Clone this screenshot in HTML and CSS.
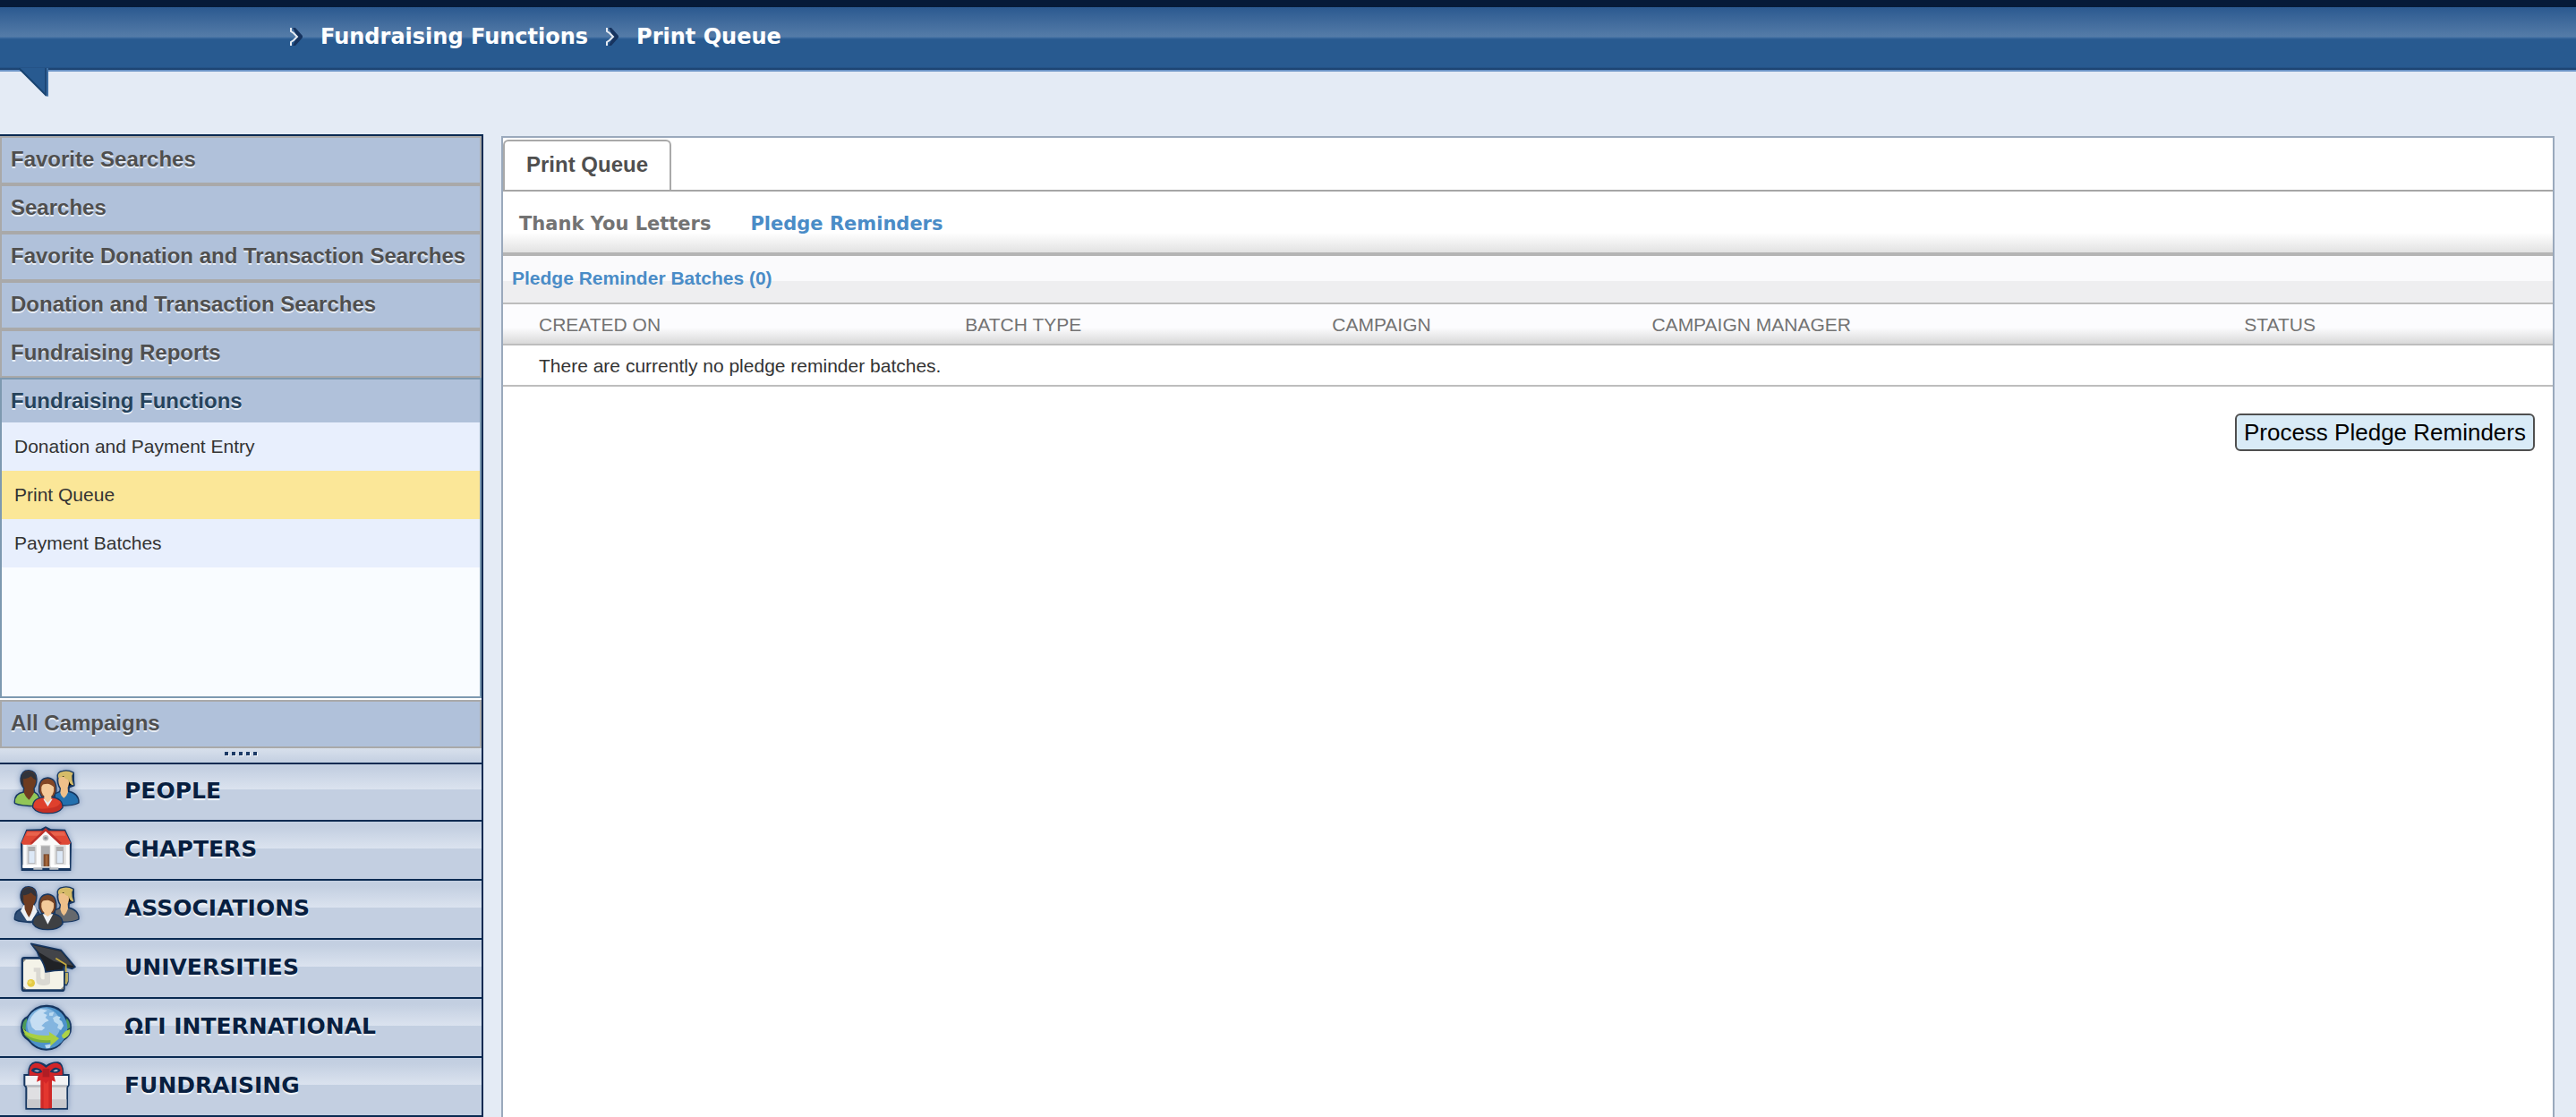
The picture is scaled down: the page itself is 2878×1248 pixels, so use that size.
FILE: index.html
```
<!DOCTYPE html>
<html lang="en">
<head>
    <meta charset="UTF-8">
    <meta name="viewport" content="width=device-width, initial-scale=1.0">
    <title>Print Queue</title>
    <link rel="stylesheet" href="styles.css">
</head>

<body>
<header class="topbar">
    <nav class="breadcrumb" aria-label="Breadcrumb">
        <svg class="chevron" viewBox="0 0 14 20"><path d="M3 0 H6 L14 9 V11 L6 20 H3 L8 10 Z" fill="#17345f"/><path d="M1 0 V4 L4 6 L8 10 L4 14 L1 16 V20" fill="none" stroke="#e6ebf2" stroke-width="2"/></svg>
        <a href="#">Fundraising Functions</a>
        <svg class="chevron" viewBox="0 0 14 20"><path d="M3 0 H6 L14 9 V11 L6 20 H3 L8 10 Z" fill="#17345f"/><path d="M1 0 V4 L4 6 L8 10 L4 14 L1 16 V20" fill="none" stroke="#e6ebf2" stroke-width="2"/></svg>
        <a href="#">Print Queue</a>
    </nav>
    <svg class="pointer" viewBox="0 0 36 34"><path d="M0 0 L34 0 L34 32 Z" fill="#285a90"/><path d="M1 0 L32 31" stroke="#17426f" stroke-width="2"/><path d="M31 0 V29" stroke="#1d4777" stroke-width="2"/><path d="M33 0 V32" stroke="#5180b4" stroke-width="1"/></svg>
</header>

<div class="page">
    <aside class="sidebar">
        <div class="accordion">
            <a class="section" href="#">Favorite Searches</a>
            <a class="section" href="#">Searches</a>
            <a class="section" href="#">Favorite Donation and Transaction Searches</a>
            <a class="section" href="#">Donation and Transaction Searches</a>
            <a class="section" href="#">Fundraising Reports</a>
            <div class="open-section">
                <a class="section-title" href="#">Fundraising Functions</a>
                <ul class="functions">
                    <li><a href="#">Donation and Payment Entry</a></li>
                    <li><a class="selected" href="#">Print Queue</a></li>
                    <li><a href="#">Payment Batches</a></li>
                </ul>
            </div>
            <a class="section" href="#">All Campaigns</a>
        </div>

        <div class="splitter"><i></i><i></i><i></i><i></i><i></i></div>

        <nav class="modules" aria-label="Modules">
            <a href="#">
                <svg class="icon" viewBox="36 39 240 192">
                    <!-- left -->
                    <g stroke="#173761" stroke-width="8" stroke-linejoin="round">
                        <path d="M51 171 Q49 141 80 137 L115 137 Q134 145 134 180 Q72 181 51 171 Z"/>
                        <path d="M71 90 Q74 63 97 64 Q120 66 121 91 Q121 112 112 122 L114 137 Q104 154 97 161 Q86 152 80 137 L82 121 Q70 108 71 90 Z"/>
                    </g>
                    <path d="M51 171 Q49 141 80 137 L115 137 Q134 145 134 180 Q72 181 51 171 Z" fill="#92c657"/>
                    <path d="M71 90 Q74 63 97 64 Q120 66 121 91 Q121 112 112 122 L114 137 Q104 154 97 161 Q86 152 80 137 L82 121 Q70 108 71 90 Z" fill="#6f3c20"/>
                    <path d="M71 92 Q72 65 98 65 Q120 68 121 95 Q112 92 104 82 Q90 93 78 90 L79 118 Q69 110 71 92 Z" fill="#31333b"/>
                    <!-- right -->
                    <g stroke="#173761" stroke-width="8" stroke-linejoin="round">
                        <path d="M186 178 V142 L203 134 H228 Q263 142 262 170 Q242 181 186 178 Z"/>
                        <path d="M195 86 Q192 68 211 66 Q228 62 245 71 Q244 92 247 112 L230 118 L228 136 L214 155 L202 137 L204 122 Q192 106 195 86 Z"/>
                    </g>
                    <path d="M186 178 V142 L203 134 H228 Q263 142 262 170 Q242 181 186 178 Z" fill="#2470ae"/>
                    <path d="M197 84 H229 Q234 106 227 120 L228 136 Q224 148 214 155 Q204 148 202 137 L204 122 Q193 106 197 84 Z" fill="#eec08a"/>
                    <path d="M195 86 Q192 68 211 66 Q228 62 245 71 L241 80 Q240 96 247 112 Q233 112 230 94 Q218 92 213 81 Q206 88 195 86 Z" fill="#d5bb68"/>
                    <!-- front -->
                    <g stroke="#173761" stroke-width="8" stroke-linejoin="round">
                        <path d="M112 186 Q110 158 147 154 H173 Q208 158 208 186 Q196 204 160 204 Q124 204 112 186 Z"/>
                        <path d="M133 134 Q129 91 160 89 Q190 92 186 134 L179 149 H141 Z"/>
                    </g>
                    <path d="M112 186 Q110 158 147 154 H173 Q208 158 208 186 Q196 204 160 204 Q124 204 112 186 Z" fill="#df402d"/>
                    <path d="M113 187 Q138 196 182 186 Q198 181 204 169 Q209 176 208 186 Q196 204 160 204 Q124 204 113 187 Z" fill="#b62720" opacity=".6"/>
                    <path d="M145 158 L160 184 L176 158 Z" fill="#e7eaf0"/>
                    <path d="M133 134 Q129 91 160 89 Q190 92 186 134 L179 149 H141 Z" fill="#834625"/>
                    <path d="M139 118 Q142 107 153 108 Q166 104 180 118 Q182 139 172 148 V158 L160 170 L148 158 V148 Q137 139 139 118 Z" fill="#f4ca9a"/>
                </svg>
                <span>PEOPLE</span>
            </a>
            <a href="#">
                <svg class="icon" viewBox="36 234 240 192">
                    <path d="M69 307 L88 260 L136 259 L153 250 L171 259 L219 260 L240 306 L238 399 H71 Z" fill="#173761"/>
                    <path d="M76 306 H234 V389 H76 Z" fill="#dedede"/>
                    <path d="M90 265 H217 L237 306 L229 311 H78 L71 306 Z" fill="#df4936"/>
                    <path d="M92 269 H215 L220 281 H87 Z" fill="#f07861" opacity=".55"/>
                    <path d="M153 255 L207 306 L195 310 H111 L101 306 Z" fill="#bd2f2a"/>
                    <path d="M153 266 L202 312 H105 Z" fill="#fafafa"/>
                    <circle cx="153" cy="289" r="10" fill="#bfbfc1"/><circle cx="153" cy="289" r="5" fill="#8c9098"/>
                    <path d="M94 318 H118 V375 H94 Z M188 318 H213 V375 H188 Z M138 316 H167 V384 H138 Z" fill="#adadaf"/>
                    <path d="M97 333 H116 V373 H97 Z M191 333 H210 V373 H191 Z" fill="#dce8f6"/>
                    <path d="M123 312 H136 V384 H123 Z M169 312 H182 V384 H169 Z M79 312 H89 V382 H79 Z M221 312 H231 V382 H221 Z" fill="#fafafa"/>
                    <path d="M146 343 H165 V384 H146 Z" fill="#7d4b2c"/><path d="M152 346 H160 V384 H152 Z" fill="#a6683c"/>
                    <path d="M76 379 H137 V389 H76 Z M171 379 H234 V389 H171 Z" fill="#fff"/>
                    <path d="M112 388 H142 V395 H112 Z M166 388 H196 V395 H166 Z" fill="#b9bdc2"/>
                </svg>
                <span>CHAPTERS</span>
            </a>
            <a href="#">
                <svg class="icon" viewBox="36 42 240 192">
                    <!-- left -->
                    <g stroke="#173761" stroke-width="8" stroke-linejoin="round">
                        <path d="M51 171 Q49 141 80 137 L115 137 Q134 145 134 180 Q72 181 51 171 Z"/>
                        <path d="M71 90 Q74 63 97 64 Q120 66 121 91 Q121 112 112 122 L114 137 Q104 154 97 161 Q86 152 80 137 L82 121 Q70 108 71 90 Z"/>
                    </g>
                    <path d="M51 171 Q49 141 80 137 L115 137 Q134 145 134 180 Q72 181 51 171 Z" fill="#304e75"/>
                    <path d="M79 124 L69 143 L90 176 H106 L125 145 L115 124 Z" fill="#eef1f5"/>
                    <path d="M71 90 Q74 63 97 64 Q120 66 121 91 Q121 112 112 122 L109 137 Q104 154 97 165 Q89 152 83 137 L82 121 Q70 108 71 90 Z" fill="#6f3c20"/>
                    <path d="M71 92 Q72 65 98 65 Q120 68 121 95 Q112 92 104 82 Q90 93 78 90 L79 118 Q69 110 71 92 Z" fill="#31333b"/>
                    <!-- right -->
                    <g stroke="#173761" stroke-width="8" stroke-linejoin="round">
                        <path d="M186 178 V142 L203 134 H228 Q263 142 262 170 Q242 181 186 178 Z"/>
                        <path d="M195 86 Q192 68 211 66 Q228 62 245 71 Q244 92 247 112 L230 118 L228 136 L214 155 L202 137 L204 122 Q192 106 195 86 Z"/>
                    </g>
                    <path d="M186 178 V142 L203 134 H228 Q263 142 262 170 Q242 181 186 178 Z" fill="#66696d"/>
                    <path d="M197 84 H229 Q234 106 227 120 L228 136 Q224 150 214 160 Q204 150 202 137 L204 122 Q193 106 197 84 Z" fill="#eec08a"/>
                    <path d="M195 86 Q192 68 211 66 Q228 62 245 71 L241 80 Q240 96 247 112 Q233 112 230 94 Q218 92 213 81 Q206 88 195 86 Z" fill="#d5bb68"/>
                    <!-- front -->
                    <g stroke="#173761" stroke-width="8" stroke-linejoin="round">
                        <path d="M112 186 Q110 158 147 154 H173 Q208 158 208 186 Q196 204 160 204 Q124 204 112 186 Z"/>
                        <path d="M133 134 Q129 91 160 89 Q190 92 186 134 L179 149 H141 Z"/>
                    </g>
                    <path d="M112 186 Q110 158 147 154 H173 Q208 158 208 186 Q196 204 160 204 Q124 204 112 186 Z" fill="#3e4043"/>
                    <path d="M143 154 L160 188 L178 154 Z" fill="#eef1f5"/>
                    <path d="M133 134 Q129 91 160 89 Q190 92 186 134 L179 149 H141 Z" fill="#754224"/>
                    <path d="M139 118 Q142 107 153 108 Q166 104 180 118 Q182 139 172 148 V153 L160 162 L148 153 V148 Q137 139 139 118 Z" fill="#f4ca9a"/>
                </svg>
                <span>ASSOCIATIONS</span>
            </a>
            <a href="#">
                <svg class="icon" viewBox="36 30 240 192">
                    <rect x="71" y="87" width="147" height="117" rx="10" fill="#173761"/>
                    <path d="M85 95 H206 L213 102 V188 L206 196 H86 L78 188 V104 Z" fill="#f4f3e8"/>
                    <path d="M78 105 L88 95 H78 Z M78 186 L88 196 H78 Z M213 186 L203 196 H213 Z" fill="#8d8c83"/>
                    <path d="M113 124 H136 V155 Q139 166 149 162 V134 H168 V175 Q165 183 147 183 Q121 184 121 166 V137 H113 Z" fill="#dad9d2"/>
                    <circle cx="104" cy="175" r="13" fill="#e4cb45"/><circle cx="101" cy="172" r="6" fill="#efdc68"/>
                    <path d="M104 43 L205 65 L252 121 L242 127 L214 120 L211 132 Q184 132 153 138 Q150 112 132 88 L124 69 Z" fill="#202226" stroke="#173761" stroke-width="5" stroke-linejoin="round"/>
                    <path d="M109 48 L204 69 L244 117 L181 102 L132 73 Z" fill="#424449"/>
                    <path d="M187 92 L221 113 V139" fill="none" stroke="#c6aa3c" stroke-width="5"/>
                    <path d="M215 139 H230 V171 L225 184 H215 Z" fill="#173761"/>
                    <path d="M219 141 H228 V168 L223 180 L218 178 Z" fill="#b9ad62"/>
                </svg>
                <span>UNIVERSITIES</span>
            </a>
            <a href="#">
                <svg class="icon" viewBox="36 228 240 192">
                    <path d="M69 324 Q71 293 91 286 Q116 247 156 248 Q198 247 221 284 Q241 297 240 325 Q241 353 213 369 Q194 401 155 401 Q119 401 94 369 Q68 353 69 324 Z" fill="#173761"/>
                    <path d="M75 326 Q75 301 90 293 V335 Z M235 325 Q235 303 223 293 L219 334 Z" fill="#4d9b57"/>
                    <circle cx="156" cy="325" r="70" fill="#4d92c9"/>
                    <circle cx="147" cy="315" r="56" fill="#83b5df"/>
                    <path d="M100 300 Q111 273 137 262 L159 267 L145 276 L158 282 L152 291 L164 301 L151 307 L139 318 L151 325 L141 334 L119 334 L107 323 Z" fill="#c6def3"/>
                    <path d="M165 275 L181 272 L176 285 L165 284 Z M177 292 L189 285 L203 289 L198 297 L207 303 L213 318 L204 333 L192 325 L196 314 L182 305 Z M150 383 L174 379 L166 393 L155 394 Z" fill="#badaf0"/>
                    <path d="M76 322 Q82 340 107 345 Q137 354 166 350 L164 338 L198 361 L169 386 V371 Q135 377 110 366 Q78 356 76 322 Z" fill="#a9cf42"/>
                    <path d="M78 343 Q116 371 169 366 V374 Q101 381 78 343 Z" fill="#79b13d"/>
                    <path d="M234 330 Q238 349 217 361 Q206 361 208 349 L220 336 Z" fill="#add348"/>
                </svg>
                <span>ΩΓΙ INTERNATIONAL</span>
            </a>
            <a href="#">
                <svg class="icon" viewBox="36 426 240 192">
                    <path d="M79 480 H94 Q92 443 119 438 Q140 438 155 450 Q175 437 195 439 Q214 443 214 480 H233 V518 L228 526 V599 H85 V526 L79 518 Z" fill="#173761"/>
                    <path d="M91 520 H223 V593 H91 Z" fill="#dfdfe2"/><path d="M91 565 H223 V593 H91 Z" fill="#c8c8cc"/>
                    <path d="M85 486 H228 V518 H85 Z" fill="#f3f3f5"/>
                    <path d="M89 518 H224 V524 H89 Z" fill="#b8b8bd"/>
                    <path d="M136 485 H174 V595 H136 Z" fill="#cf2927"/><path d="M146 485 H163 V595 H146 Z" fill="#e3362f"/>
                    <path d="M98 485 Q94 449 118 443 Q137 442 154 459 Q175 441 193 444 Q213 450 209 484 L181 485 L186 506 L166 499 L154 512 L141 499 L123 506 L128 485 Z" fill="#d32528"/>
                    <path d="M104 469 Q113 451 137 465 L142 473 Q119 484 104 469 Z M167 473 Q184 448 203 466 Q199 482 167 473 Z" fill="#173761"/>
                    <path d="M114 469 Q123 463 133 470 Q123 475 114 469 Z M178 470 Q188 461 195 468 Q188 474 178 470 Z" fill="#b3bfd1"/>
                    <path d="M143 462 H166 V490 H143 Z" fill="#b01d24"/>
                </svg>
                <span>FUNDRAISING</span>
            </a>
        </nav>
    </aside>

    <main class="content">
        <div class="tabs">
            <a class="tab" href="#">Print Queue</a>
        </div>
        <div class="subtabs">
            <a href="#">Thank You Letters</a>
            <a class="current" href="#">Pledge Reminders</a>
        </div>
        <h2 class="batch-title">Pledge Reminder Batches (0)</h2>
        <table class="batches">
            <thead>
                <tr>
                    <th class="created">CREATED ON</th>
                    <th class="type">BATCH TYPE</th>
                    <th class="campaign">CAMPAIGN</th>
                    <th class="manager">CAMPAIGN MANAGER</th>
                    <th class="status">STATUS</th>
                </tr>
            </thead>
            <tbody>
                <tr>
                    <td colspan="5">There are currently no pledge reminder batches.</td>
                </tr>
            </tbody>
        </table>
        <div class="actions">
            <button type="button">Process Pledge Reminders</button>
        </div>
    </main>
</div>
</body>
</html>
```
FILE: styles.css
```
* {
    box-sizing: border-box;
}

body {
    margin: 0;
    height: 100vh;
    display: flex;
    flex-direction: column;
    overflow: hidden;
    background-color: #e4ebf5;
    color: #333;
    font-family: "Liberation Sans", Arial, sans-serif;
    font-size: 21px;
}

a {
    color: inherit;
    text-decoration: none;
}

/* Top bar */
.topbar {
    position: relative;
    height: 80px;
    flex: none;
    border-top: 8px solid #061a38;
    border-bottom: 2px solid #6b93c6;
    background: linear-gradient(#2b5990 0, #557ca8 33px, #3f6da1 34px, #285a90 36px, #285a90 67px, #1a3f6c 69px);
}

.breadcrumb {
    display: flex;
    align-items: center;
    gap: 20px;
    height: 66px;
    padding-left: 324px;
    color: #fff;
    font-family: "DejaVu Sans", Verdana, sans-serif;
    font-size: 24px;
    font-weight: bold;
}

.chevron {
    width: 14px;
    height: 20px;
}

.pointer {
    position: absolute;
    top: 68px;
    left: 20px;
    width: 36px;
    height: 34px;
}

.page {
    flex: 1;
    display: flex;
    gap: 20px;
    min-height: 0;
    padding-right: 24px;
}

/* Sidebar */
.sidebar {
    width: 540px;
    flex: none;
    margin-top: 70px;
    border-top: 2px solid #0a2a52;
    border-right: 2px solid #0a2a52;
    background-color: #fff;
}

.section {
    display: block;
    height: 54px;
    padding-left: 10px;
    border: 2px solid #a9a9a9;
}

.section,
.section-title {
    background-color: #b0c1da;
    color: #4f4f4f;
    font-size: 24px;
    font-weight: bold;
    line-height: 48px;
    text-shadow: 0 2px 0 #e8eef6;
}

.open-section {
    height: 358px;
    margin-bottom: 2px;
    border: 2px solid #7d99b0;
    background-color: #f9fcff;
}

.section-title {
    display: block;
    height: 48px;
    padding-left: 10px;
    color: #26435c;
}

.functions {
    margin: 0;
    padding: 0;
    list-style: none;
}

.functions a {
    display: block;
    padding-left: 14px;
    background-color: #e8effd;
    line-height: 54px;
}

.functions .selected {
    background-color: #fbe798;
}

.splitter {
    display: flex;
    justify-content: center;
    gap: 4px;
    height: 16px;
    padding-top: 4px;
    background: linear-gradient(#d8e0ec, #c3cfe1);
}

.splitter i {
    width: 4px;
    height: 4px;
    background-color: #1c3a66;
    box-shadow: 1px 1px 0 #f4f7fa;
}

.modules a {
    display: flex;
    align-items: center;
    height: 66px;
    padding-left: 12px;
    border-top: 2px solid #0a2a52;
    background: linear-gradient(#c3cfe1 0, #c3cfe1 6px, #dbe3ef 30px, #c3cfe1 30px);
    color: #081f40;
    font-family: "DejaVu Sans", Verdana, sans-serif;
    font-size: 25px;
    font-weight: bold;
    text-shadow: 0 2px 1px #f4f7fb;
}

.modules a:first-child {
    height: 64px;
    background-position: 0 -2px;
}

.modules a:last-child {
    height: 68px;
    border-bottom: 2px solid #0a2a52;
}

.modules span {
    padding-bottom: 4px;
}

.icon {
    width: 80px;
    height: 64px;
    margin-right: 47px;
    filter: drop-shadow(0 0 3px #7a93b8);
}

/* Main panel */
.content {
    flex: 1;
    margin-top: 72px;
    border: 2px solid #9aa9bc;
    border-bottom: 0;
    background-color: #fff;
}

.tabs {
    display: flex;
    height: 60px;
    padding-top: 2px;
    border-bottom: 2px solid #a6a6a6;
}

.tab {
    padding: 0 24px;
    border: 2px solid #a9a9a9;
    border-bottom: 0;
    border-radius: 6px 6px 0 0;
    color: #4f4f4f;
    font-size: 24px;
    font-weight: bold;
    line-height: 52px;
}

.subtabs {
    display: flex;
    gap: 44px;
    height: 72px;
    padding-left: 18px;
    border-bottom: 4px solid #b4b4b4;
    background: linear-gradient(#fff 0, #fff 46px, #e2e2e2 68px);
    color: #737373;
    font-family: "DejaVu Sans", Verdana, sans-serif;
    font-weight: bold;
    line-height: 72px;
}

.subtabs .current,
.batch-title {
    color: #4a8cc7;
}

.batch-title {
    height: 54px;
    margin: 0;
    padding-left: 10px;
    border-bottom: 2px solid #bdbdbd;
    background: linear-gradient(#fafafc 0, #fafafc 28px, #eeeef0 28px);
    font-size: 21px;
    line-height: 50px;
}

.batches {
    width: 100%;
    border-collapse: separate;
    border-spacing: 0;
    table-layout: fixed;
}

.batches th,
.batches td {
    height: 46px;
    padding: 2px 0 0 40px;
    border-bottom: 2px solid #bdbdbd;
    text-align: left;
}

.batches th {
    background: linear-gradient(#fcfcfe 0, #fcfcfe 26px, #d9d9d9 44px);
    color: #737373;
    font-weight: normal;
}

.created { width: 20.8%; }
.type { width: 17.9%; }
.campaign { width: 15.6%; }
.manager { width: 28.9%; }
.status { width: 16.8%; }

.actions {
    display: flex;
    justify-content: flex-end;
    padding: 30px 20px;
}

.actions button {
    height: 42px;
    padding: 0 8px;
    border: 2px solid #4f4f4f;
    border-radius: 6px;
    background-color: #d9ebf7;
    color: #000;
    font-family: "Liberation Sans", Arial, sans-serif;
    font-size: 26px;
    line-height: 38px;
}
```
